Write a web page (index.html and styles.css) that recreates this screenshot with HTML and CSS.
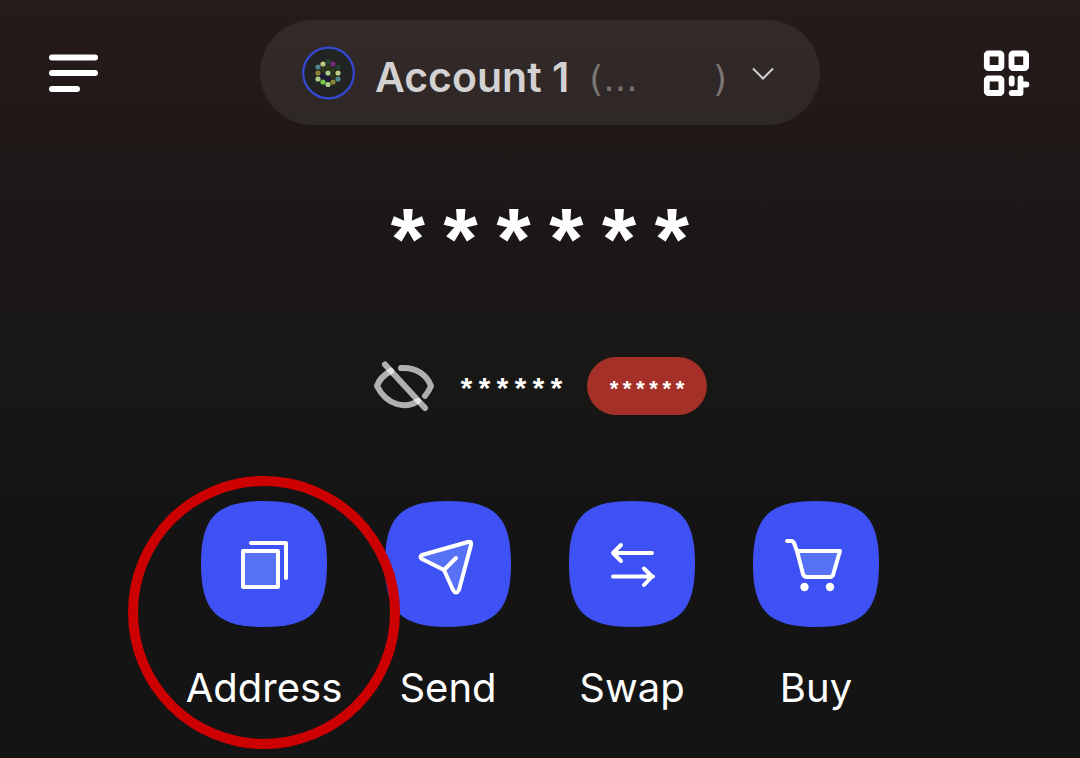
FILE: index.html
```html
<!DOCTYPE html>
<html lang="en">
<head>
<meta charset="utf-8">
<meta name="viewport" content="width=device-width, initial-scale=1">
<title>Wallet</title>
<link rel="stylesheet" href="styles.css">
</head>
<body>
<header class="topbar">
  <button class="icon-button" type="button" aria-label="Menu">
    <svg width="50" height="50" viewBox="0 0 50 50" fill="none" stroke="#fff" stroke-width="6" stroke-linecap="round"><path d="M4 9.500H47M4 25H47M4 41H29"/></svg>
  </button>
  <button class="account" type="button">
    <svg class="avatar" width="54" height="54" viewBox="0 0 54 54">
      <circle cx="27.500" cy="27" r="25.300" fill="#222323" stroke="#3549d4" stroke-width="2.2"/>
      <g fill="#bfca83"><circle cx="22" cy="18" r="2.6"/><circle cx="37" cy="27" r="2.6"/></g>
      <g fill="#a9cf86"><circle cx="27" cy="27" r="2.6"/><circle cx="17" cy="33" r="2.6"/><circle cx="27" cy="38.500" r="2.6"/></g>
      <g fill="#4f8589"><circle cx="17" cy="21" r="2.6"/><circle cx="37" cy="33" r="2.6"/></g>
      <g fill="#898237"><circle cx="17" cy="27" r="2.6"/><circle cx="32" cy="36" r="2.6"/></g>
      <g fill="#24402f"><circle cx="27" cy="15.500" r="2.6"/><circle cx="37" cy="21" r="2.6"/></g>
      <g fill="#2d3b1b"><circle cx="27" cy="21" r="2.6"/><circle cx="22" cy="24" r="2.6"/><circle cx="32" cy="24" r="2.6"/><circle cx="32" cy="30" r="2.6"/></g>
      <g fill="#20163f"><circle cx="22" cy="30" r="2.6"/><circle cx="27" cy="33" r="2.6"/></g>
      <circle cx="32" cy="18" r="2.6" fill="#7d267a"/><circle cx="22" cy="36" r="2.6" fill="#75c944"/>
    </svg>
    <span class="account-name">Account 1</span>
    <span class="account-address"><span>(...</span><span>)</span></span>
    <svg class="chevron" width="24" height="16" viewBox="0 0 24 16" fill="none" stroke="#d3d1d1" stroke-width="2"><path d="M2 3.500L12 13.500L22 3.500"/></svg>
  </button>
  <button class="icon-button" type="button" aria-label="Scan QR code">
    <svg width="50" height="50" viewBox="0 0 50 50" fill="none" stroke="#fff" stroke-width="5.800" stroke-linecap="round" stroke-linejoin="round"><path d="M7.800 5.500H16.400Q19.400 5.500 19.400 8.500V17Q19.400 20 16.400 20H7.800Q4.800 20 4.800 17V8.500Q4.800 5.500 7.800 5.500Z" stroke="none"/><path d="M5.800 5.500H18.400L19.400 6.500V19L18.400 20H5.800L4.800 19V6.500ZM30.500 5.500H43.100L44.100 6.500V19L43.100 20H30.500L29.500 19V6.500ZM5.800 30.500H18.400L19.400 31.500V44L18.400 45H5.800L4.800 44V31.500ZM29.700 30.500V35.500M38.500 30.500V45H29.700M38.500 36.500H44.500"/></svg>
  </button>
</header>
<main class="wallet">
  <h1 class="balance">******</h1>
  <div class="change">
    <button class="icon-button" type="button" aria-label="Show balance">
      <svg width="62" height="50" viewBox="0 0 62 50" fill="none" stroke="#fff" stroke-opacity=".66" stroke-width="6" stroke-linecap="round" stroke-linejoin="round"><path d="M28 7C43 6 54 14 58 25Q56 30 52 35"/><path d="M18 10Q7 16 4 25C14 45 33 48 45 40"/><path d="M12 3.500L52 47"/></svg>
    </button>
    <span class="change-value">******</span>
    <span class="change-badge">******</span>
  </div>
  <nav class="actions" aria-label="Wallet actions">
    <button class="action" type="button">
      <svg width="126" height="126" viewBox="0 0 126 126" fill="none" stroke="#fff" stroke-width="4" stroke-linecap="round" stroke-linejoin="round"><path class="tile" d="M0 63C0 16 16 0 63 0S126 16 126 63 110 126 63 126 0 110 0 63Z"/><path fill="#5671f5" d="M42 50H77V86H42Z"/><path d="M50 42H85V77"/></svg>
      <span>Address</span>
      <i class="highlight"></i>
    </button>
    <button class="action" type="button">
      <svg width="126" height="126" viewBox="0 0 126 126" fill="none" stroke="#fff" stroke-width="4" stroke-linecap="round" stroke-linejoin="round"><path class="tile" d="M0 63C0 16 16 0 63 0S126 16 126 63 110 126 63 126 0 110 0 63Z"/><path fill="#5671f5" d="M37 54L83 41Q87 40 86 44L74 89Q71 94 68 89L59 69 37 58Q34 56 37 54Z"/><path d="M59 69L71 57"/></svg>
      <span>Send</span>
    </button>
    <button class="action" type="button">
      <svg width="126" height="126" viewBox="0 0 126 126" fill="none" stroke="#fff" stroke-width="4" stroke-linecap="round" stroke-linejoin="round"><path class="tile" d="M0 63C0 16 16 0 63 0S126 16 126 63 110 126 63 126 0 110 0 63Z"/><path d="M83 52H44M52 44L44 52L52 60M44 75.500H84M75 67.500L83 75.500L75 84"/></svg>
      <span>Swap</span>
    </button>
    <button class="action" type="button">
      <svg width="126" height="126" viewBox="0 0 126 126" fill="none" stroke="#fff" stroke-width="4" stroke-linecap="round" stroke-linejoin="round"><path class="tile" d="M0 63C0 16 16 0 63 0S126 16 126 63 110 126 63 126 0 110 0 63Z"/><path fill="#5671f5" d="M44 50H87L80 74Q79 76 77 76H54Q51 76 50 73Z"/><path d="M34 40H38Q40 40 41 42L44 50"/><g fill="#fff" stroke="none"><circle cx="51.500" cy="86" r="4.200"/><circle cx="77" cy="86" r="4.200"/></g></svg>
      <span>Buy</span>
    </button>
  </nav>
</main>
</body>
</html>
```
FILE: styles.css
```css
* {
  box-sizing: border-box;
}

body {
  margin: 0;
  min-height: 100vh;
  background: linear-gradient(#261b1a 0, #1d1717 200px, #191816 350px, #141414 500px);
  color: #fff;
  font-family: Inter, sans-serif;
}

button {
  margin: 0;
  padding: 0;
  border: 0;
  background: none;
  color: inherit;
  font: inherit;
  cursor: pointer;
}

svg {
  display: block;
  flex: none;
}

.topbar {
  display: flex;
  align-items: center;
  justify-content: space-between;
  padding: 20px 48px 0;
}

.account {
  display: flex;
  align-items: center;
  width: 560px;
  height: 105px;
  padding: 0 45px 0 41px;
  border-radius: 53px;
  background: rgba(255, 255, 255, 0.065);
}

.account-name {
  margin-left: 20px;
  padding-top: 8px;
  color: #d3d1d1;
  font-size: 41px;
  font-weight: 600;
  white-space: nowrap;
}

.account-address {
  display: flex;
  flex: 1;
  justify-content: space-between;
  margin: 0 24px 0 20px;
  padding-top: 12px;
  color: #7b7474;
  font-family: "DejaVu Sans", sans-serif;
  font-size: 36px;
}

.balance {
  margin: 64px 0 0;
  font-family: "Liberation Mono", monospace;
  font-size: 88px;
  font-weight: 700;
  line-height: 120px;
  text-align: center;
}

.change {
  display: flex;
  align-items: center;
  justify-content: center;
  margin-top: 48px;
  font-family: "Liberation Mono", monospace;
  font-weight: 700;
}

.change-value {
  margin: 0 22px;
  padding-top: 12px;
  font-size: 30px;
  line-height: 46px;
}

.change-badge {
  height: 58px;
  padding: 12px 20px 0;
  border-radius: 29px;
  background: #a43027;
  font-size: 22px;
  line-height: 46px;
}

.actions {
  display: grid;
  grid-template-columns: repeat(4, 184px);
  justify-content: center;
  margin-top: 86px;
}

.action {
  position: relative;
  display: flex;
  flex-direction: column;
  align-items: center;
  gap: 36px;
  font-size: 40px;
  line-height: 50px;
}

.tile {
  fill: #3d51f5;
  stroke: none;
}

.highlight {
  position: absolute;
  z-index: 1;
  top: -25px;
  left: -44px;
  width: 272px;
  height: 273px;
  border: 10px solid #c00;
  border-radius: 50%;
  pointer-events: none;
}
```
